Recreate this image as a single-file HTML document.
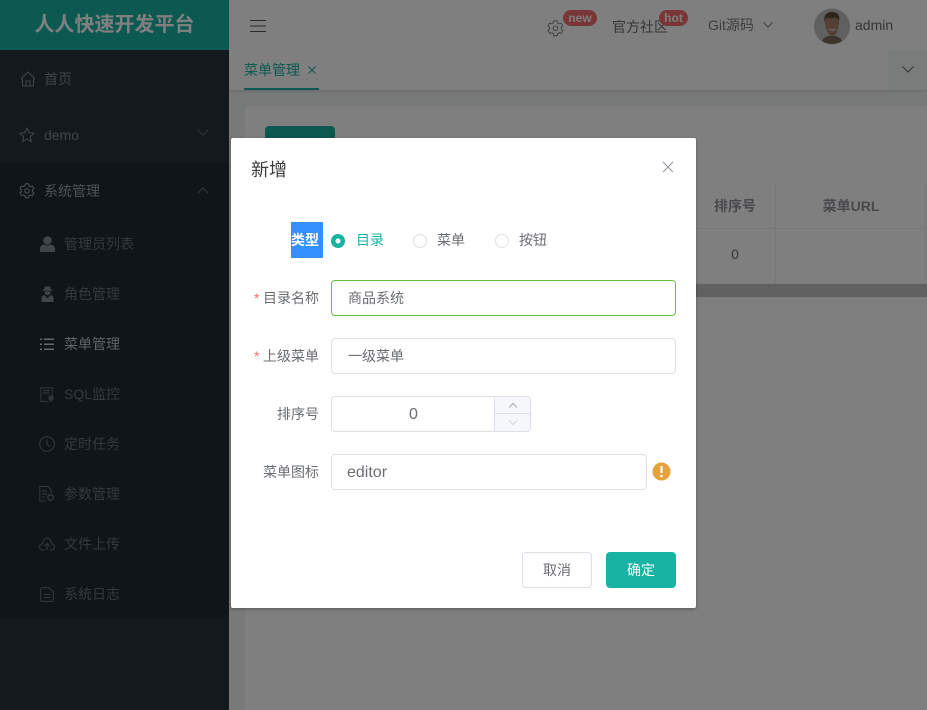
<!DOCTYPE html>
<html lang="zh"><head><meta charset="utf-8"><title>人人快速开发平台</title>
<style>
*{box-sizing:border-box}
html,body{margin:0;padding:0}
body{width:927px;height:710px;overflow:hidden;position:relative;background:#f1f4f5;font:14px "Liberation Sans","Noto Sans CJK SC",sans-serif;color:#6a6d72}
.a{position:absolute;white-space:nowrap}
.t{position:absolute;white-space:nowrap;line-height:20px}
svg{position:absolute;overflow:visible;fill:none}
.side{position:absolute;left:0;top:0;width:229px;height:710px;background:#263238}
.m{color:#7f8b92}
.s{color:#66727a}
.b{position:absolute;background:#fff;border:1px solid #dcdfe6;border-radius:4px;color:#6a6d72}
</style></head><body>

<div class="side"></div>
<div class="a" style="left:0;top:0;width:229px;height:50px;background:#17b3a3;color:#fff;font-size:20px;font-weight:bold;line-height:50px;text-align:center">人人快速开发平台</div>
<div class="a" style="left:0;top:162px;width:229px;height:455px;background:#1f2a30"></div>

<svg style="left:20px;top:71px" width="16" height="16" viewBox="0 0 16 16" stroke="#7f8b92" stroke-width="1"><path d="M.8 8 8 1l7.200 7M2.500 7v8h11V7M6 15v-5h4v5"/></svg>
<div class="t m" style="left:44px;top:69px">首页</div>
<svg style="left:19px;top:127px" width="16" height="16" viewBox="0 0 16 16" stroke="#7f8b92"><path d="M8 1l2.100 4.600 5 .6-3.700 3.400 1 5L8 12.100l-4.400 2.500 1-5L.9 6.200l5-.6z"/></svg>
<div class="t m" style="left:44px;top:125px">demo</div>
<svg style="left:197px;top:129px" width="12" height="8" viewBox="0 0 12 8" stroke="#66727a"><path d="M1 1l5 5 5-5"/></svg>
<svg style="left:19px;top:183px" width="16" height="16" viewBox="0 0 16 16" stroke="#98a4ab"><path d="M6.500.8h3l.5 2 1.400.8 2-.6 1.500 2.600-1.500 1.400v1.600l1.500 1.400-1.500 2.600-2-.6-1.400.8-.5 2h-3l-.5-2-1.400-.8-2 .6L.9 10l1.500-1.400V7L.9 5.600l1.500-2.600 2 .6 1.400-.8z"/><circle cx="8" cy="7.800" r="2.200"/></svg>
<div class="t" style="left:44px;top:181px;color:#98a4ab">系统管理</div>
<svg style="left:197px;top:186px" width="12" height="8" viewBox="0 0 12 8" stroke="#66727a"><path d="M1 7l5-5 5 5"/></svg>

<svg style="left:40px;top:236px" width="15" height="16" viewBox="0 0 15 16"><circle cx="7.500" cy="4.500" r="4.300" fill="#7f8b92"/><path fill="#7f8b92" d="M0 16v-3c0-3 2.500-4.500 4-4.500 2 1.300 5 1.300 7 0 1.500 0 4 1.500 4 4.500v3z"/></svg>
<div class="t s" style="left:64px;top:234px">管理员列表</div>
<svg style="left:41px;top:286px" width="13" height="16" viewBox="0 0 13 16"><path fill="#7f8b92" d="M4 .5h5l1 3 1.500.6v.7H1.500v-.7L3 3.500zM3.500 5.500h6c0 2-1 3.500-3 3.500s-3-1.500-3-3.500zM.5 16v-4c0-1.600 1-2.500 3-3l3 3.500 3-3.500c2 .5 3 1.400 3 3v4z"/></svg>
<div class="t s" style="left:64px;top:284px">角色管理</div>
<svg style="left:40px;top:338px" width="14" height="13" viewBox="0 0 14 13" stroke="#c6d0d6" stroke-width="1.500"><path d="M4 1.200h10M4 6.200h10M4 11.200h10M0 1.200h2M0 6.200h2M0 11.200h2"/></svg>
<div class="t" style="left:64px;top:334px;color:#bcc6cc">菜单管理</div>
<svg style="left:40px;top:387px" width="14" height="15" viewBox="0 0 14 15" stroke="#5f6b72"><path d="M9 14.500H.8V.800h11.400V8"/><path d="M3 3.500h7M3 6h7" stroke-width="1.200"/><path d="M9 9h4v3l-2 2-2-2z" fill="#5f6b72"/></svg>
<div class="t s" style="left:64px;top:384px">SQL监控</div>
<svg style="left:39px;top:436px" width="16" height="16" viewBox="0 0 16 16" stroke="#66727a"><circle cx="8" cy="8" r="7.300"/><path d="M8 3.500V8l2.500 3"/></svg>
<div class="t s" style="left:64px;top:434px">定时任务</div>
<svg style="left:39px;top:486px" width="16" height="16" viewBox="0 0 16 16" stroke="#66727a"><path d="M7 15H.8V.5h8l3.500 3.500V7"/><path d="M3 5h5M3 8h5M3 11h3"/><circle cx="11.500" cy="11.500" r="2.800" stroke-width="1.500"/></svg>
<div class="t s" style="left:64px;top:484px">参数管理</div>
<svg style="left:39px;top:537px" width="16" height="14" viewBox="0 0 16 14" stroke="#66727a"><path d="M5 13H3.500C1.500 13 .5 11.500.5 10s1-3 3-3C3.800 3 6 1 8 1s4.300 2 4.500 6c2 0 3 1.500 3 3s-1 3-3 3H11"/><path d="M8 13V6.500M5.500 9 8 6.500 10.500 9"/></svg>
<div class="t s" style="left:64px;top:534px">文件上传</div>
<svg style="left:40px;top:587px" width="14" height="15" viewBox="0 0 14 15" stroke="#66727a"><path d="M9 .6H2.500c-1 0-1.800.7-1.800 1.700v10.400c0 1 .8 1.700 1.800 1.700h9c1 0 1.800-.7 1.800-1.700V4.800zM4 7.500h6M4 10.500h6"/></svg>
<div class="t s" style="left:64px;top:584px">系统日志</div>

<div class="a" style="left:229px;top:0;width:698px;height:50px;background:#fff;box-shadow:0 1px 2px rgba(0,0,0,.1)"></div>
<svg style="left:250px;top:20px" width="16" height="12" viewBox="0 0 16 12" stroke="#555" stroke-width="1"><path d="M0 .5h16M0 6h16M0 11.500h16"/></svg>
<svg style="left:547px;top:20px" width="17" height="17" viewBox="0 0 16 16" stroke="#7a7d83" stroke-width=".9"><path d="M6.500.8h3l.5 2 1.400.8 2-.6 1.500 2.600-1.500 1.400v1.600l1.500 1.400-1.500 2.600-2-.6-1.400.8-.5 2h-3l-.5-2-1.400-.8-2 .6L.9 10l1.500-1.400V7L.9 5.600l1.500-2.600 2 .6 1.400-.8z"/><circle cx="8" cy="7.800" r="2.200"/></svg>
<div class="a" style="left:563px;top:10px;width:34px;height:16px;border-radius:8px;background:#f56c6c;color:#fff;font-size:12px;font-weight:bold;line-height:16px;text-align:center">new</div>
<div class="t" style="left:612px;top:17px;color:#6a6d72">官方社区</div>
<div class="a" style="left:659px;top:10px;width:29px;height:16px;border-radius:8px;background:#f56c6c;color:#fff;font-size:12px;font-weight:bold;line-height:16px;text-align:center">hot</div>
<div class="t" style="left:708px;top:15px;color:#7a7d83">Git源码</div>
<svg style="left:763px;top:22px" width="10" height="6" viewBox="0 0 10 6" stroke="#7a7d83"><path d="M.5.500l4.500 4.500L9.500.500"/></svg>
<svg style="left:814px;top:8px" width="36" height="37" viewBox="0 0 36 37">
<circle cx="18" cy="18.500" r="18" fill="#c0c0c0"/>
<path fill="#7a6a58" d="M8 33c2-4 5-5 10-5.500 5 .5 8 1.500 10 5.500a18 18 0 0 1-20 0z"/>
<path fill="#a88068" d="M11 13c0-5 3-7 7-7s7 3 7 8c0 8-3 14-7 14s-7-7-7-15z"/>
<path fill="#5a4838" d="M10.500 15C9 7 13 4 18 4s8.500 3 7 9c-1-2.500-2-3.500-5-3.500-3 1-6 1-7.500 0-1 1-1.800 2-2 5.500z"/>
<path fill="#d8d0c6" d="M14 20.500c3 1 6 1 8.500 0-1 3-7 3-8.500 0z"/>
</svg>
<div class="t" style="left:855px;top:15px;color:#6a6d72">admin</div>

<div class="a" style="left:229px;top:50px;width:698px;height:40px;background:#fff;box-shadow:0 2px 2px rgba(0,0,0,.1)"></div>
<div class="t" style="left:244px;top:60px;color:#17b3a3">菜单管理</div>
<svg style="left:308px;top:66px" width="8" height="8" viewBox="0 0 8 8" stroke="#17b3a3"><path d="M.5.500l7 7M7.500.500l-7 7"/></svg>
<div class="a" style="left:244px;top:88px;width:75px;height:2px;background:#17b3a3"></div>
<div class="a" style="left:888px;top:50px;width:39px;height:40px;background:#f4f6f7"></div>
<svg style="left:902px;top:66px" width="12" height="7" viewBox="0 0 12 7" stroke="#606266"><path d="M.5.500 6 6 11.500.500"/></svg>

<div class="a" style="left:245px;top:106px;width:682px;height:604px;background:#fff;border-radius:4px 0 0 0"></div>
<div class="a" style="left:265px;top:126px;width:70px;height:36px;background:#17b3a3;border-radius:4px"></div>
<div class="a" style="left:265px;top:184px;width:661px;height:100px;border-top:1px solid #ebeef5"></div>
<div class="a" style="left:695px;top:184px;width:231px;height:45px;background:#fff;border-bottom:1px solid #ebeef5"></div>
<div class="a" style="left:775px;top:184px;width:1px;height:100px;background:#ebeef5"></div>
<div class="a" style="left:925px;top:184px;width:1px;height:100px;background:#ebeef5"></div>
<div class="t" style="left:695px;top:196px;width:80px;text-align:center;font-weight:bold;color:#909399">排序号</div>
<div class="t" style="left:776px;top:196px;width:150px;text-align:center;font-weight:bold;color:#909399">菜单URL</div>
<div class="t" style="left:695px;top:244px;width:80px;text-align:center">0</div>
<div class="a" style="left:245px;top:283px;width:682px;height:15px;background:#f5f5f5"></div>
<div class="a" style="left:245px;top:284px;width:682px;height:13px;background:#c1c1c1"></div>

<div class="a" style="left:0;top:0;width:927px;height:710px;background:rgba(0,0,0,.5)"></div>

<div class="a" style="left:231px;top:138px;width:465px;height:470px;background:#fff;border-radius:2px;box-shadow:0 1px 3px rgba(0,0,0,.3)"></div>
<div class="t" style="left:251px;top:158px;font-size:18px;line-height:24px;color:#3a3b3e">新增</div>
<svg style="left:663px;top:162px" width="10" height="10" viewBox="0 0 10 10" stroke="#909399"><path d="M0 0l10 10M10 0 0 10"/></svg>

<div class="a" style="left:291px;top:222px;width:32px;height:36px;background:#3390ff;color:#fff;line-height:36px;text-align:left;font-size:14px;font-weight:bold;overflow:hidden">类型</div>
<svg style="left:331px;top:234px" width="14" height="14" viewBox="0 0 14 14"><circle cx="7" cy="7" r="7" fill="#17b3a3"/><circle cx="7" cy="7" r="2.500" fill="#fff"/></svg>
<div class="t" style="left:356px;top:230px;color:#17b3a3">目录</div>
<svg style="left:413px;top:234px" width="14" height="14" viewBox="0 0 14 14"><circle cx="7" cy="7" r="6.500" fill="#fff" stroke="#dcdfe6"/></svg>
<div class="t" style="left:437px;top:230px">菜单</div>
<svg style="left:495px;top:234px" width="14" height="14" viewBox="0 0 14 14"><circle cx="7" cy="7" r="6.500" fill="#fff" stroke="#dcdfe6"/></svg>
<div class="t" style="left:519px;top:230px">按钮</div>

<div class="t" style="left:254px;top:288px;color:#f56c6c">*</div>
<div class="t" style="left:263px;top:288px">目录名称</div>
<div class="b" style="left:331px;top:280px;width:345px;height:36px;border-color:#67c23a;line-height:34px;padding-left:16px">商品系统</div>

<div class="t" style="left:254px;top:346px;color:#f56c6c">*</div>
<div class="t" style="left:263px;top:346px">上级菜单</div>
<div class="b" style="left:331px;top:338px;width:345px;height:36px;line-height:34px;padding-left:16px">一级菜单</div>

<div class="t" style="left:277px;top:404px">排序号</div>
<div class="b" style="left:331px;top:396px;width:200px;height:36px;line-height:36px;text-align:center;padding-right:35px;font-size:16px">0</div>
<div class="a" style="left:494px;top:397px;width:36px;height:17px;background:#f5f7fa;border-left:1px solid #dcdfe6;border-bottom:1px solid #dcdfe6;border-radius:0 3px 0 0"></div>
<div class="a" style="left:494px;top:414px;width:36px;height:17px;background:#f5f7fa;border-left:1px solid #dcdfe6;border-radius:0 0 3px 0"></div>
<svg style="left:508px;top:402px" width="10" height="6" viewBox="0 0 10 6" stroke="#a8abb2"><path d="M1 5.500l4-4 4 4"/></svg>
<svg style="left:508px;top:420px" width="10" height="6" viewBox="0 0 10 6" stroke="#d0d4dc"><path d="M1 .5l4 4 4-4"/></svg>

<div class="t" style="left:263px;top:462px">菜单图标</div>
<div class="b" style="left:331px;top:454px;width:316px;height:36px;line-height:36px;padding-left:15px;font-size:16px">editor</div>
<svg style="left:652px;top:462px" width="19" height="19" viewBox="0 0 19 19"><circle cx="9.500" cy="9.500" r="9" fill="#e6a23c"/><path d="M9.500 4v7" stroke="#fff" stroke-width="2.200"/><circle cx="9.500" cy="14" r="1.300" fill="#fff"/></svg>

<div class="b" style="left:522px;top:552px;width:70px;height:36px;line-height:34px;text-align:center">取消</div>
<div class="a" style="left:606px;top:552px;width:70px;height:36px;background:#17b3a3;border-radius:4px;color:#fff;line-height:36px;text-align:center">确定</div>

</body></html>
